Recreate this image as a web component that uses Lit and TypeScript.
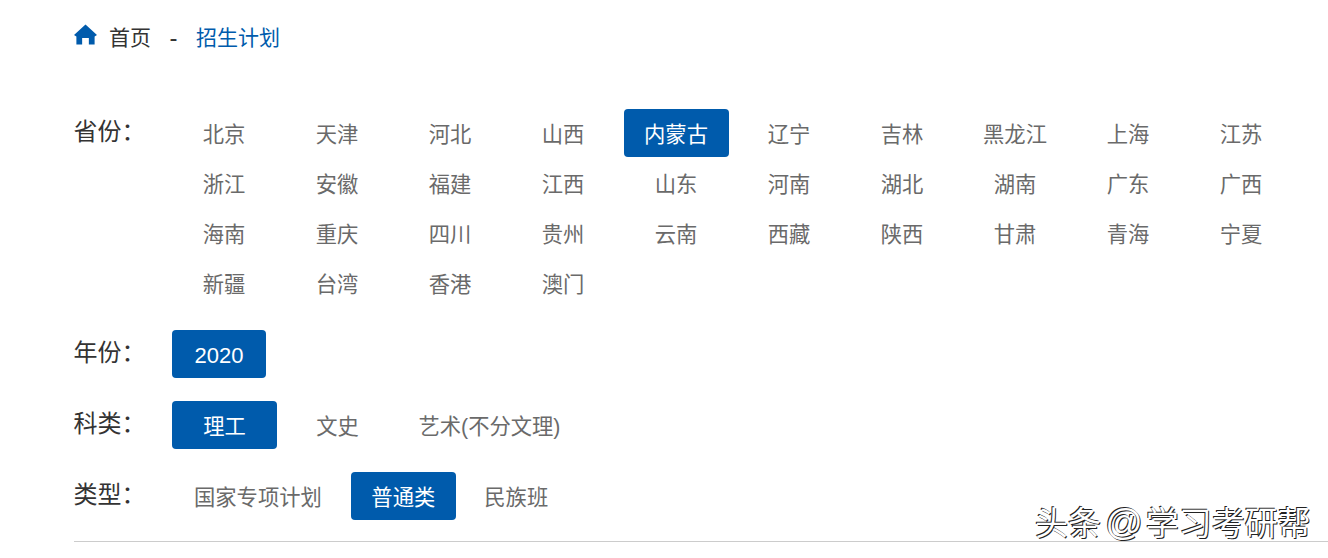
import { LitElement, html, css } from "lit";
import { customElement } from "lit/decorators.js";

const provinces = ["北京","天津","河北","山西","内蒙古","辽宁","吉林","黑龙江","上海","江苏","浙江","安徽","福建","江西","山东","河南","湖北","湖南","广东","广西","海南","重庆","四川","贵州","云南","西藏","陕西","甘肃","青海","宁夏","新疆","台湾","香港","澳门"];

@customElement("app-root")
export class AppRoot extends LitElement {
  static styles = css`
    :host { display: block; position: relative; width: 1328px; height: 558px; overflow: hidden; background: #fff; font-family: "Liberation Sans", "Noto Sans CJK SC", sans-serif; color: #333; }
    .page { display: flex; flex-direction: column; padding: 21px 0 0 74px; }
    .crumb { display: flex; align-items: center; height: 29px; padding-top: 2px; font-size: 21px; line-height: 29px; color: #333; margin-bottom: 57px; }
    .crumb svg { width: 23px; height: 23px; margin-right: 12px; margin-top: -5px; }
    .sep { margin: 0 18.5px; font-size: 24px; line-height: 20px; }
    .now { color: #005bac; }
    .row { display: flex; margin-bottom: 23px; }
    .label { width: 98px; flex: none; font-size: 24px; line-height: 46px; color: #333; margin-left: -0.5px; margin-right: 0.5px; }
    .grid { display: grid; grid-template-columns: repeat(10, 113px); row-gap: 2px; justify-items: center; margin-left: -4.5px; }
    .opts { display: flex; gap: 8px; }
    .opt { box-sizing: border-box; height: 48px; line-height: 52px; padding: 0 20.5px; font-size: 21.3px; color: #6a6a6a; border-radius: 4px; text-align: center; white-space: nowrap; }
    .wide { width: 105px; }
    .num { width: 94px; padding: 0; font-size: 22px; }
    .first { padding: 0 21px 0 22px; }
    .on { background: #005bac; color: #fff; }
    .line { height: 1px; background: #ccc; margin-top: -2px; }
    .mark { position: absolute; left: 1035px; top: 501px; font-size: 33px; word-spacing: -5px; line-height: 44px; color: #fff; white-space: nowrap; text-shadow: -1px -1px 0 #222, 1px 1px 0 #222; }
    .at { font-size: 37px; margin-right: 3px; }
  `;
  render() {
    return html`<div class="page">
      <div class="crumb">
        <svg viewBox="0 0 24 24"><path fill="#005bac" d="M12 0.5 L24 11.5 L21.5 13 L21.5 21.5 L15.5 21.5 L15.5 14.5 L8.5 14.5 L8.5 21.5 L2.5 21.5 L2.5 13 L0 11.5 Z"/></svg>
        <span>首页</span><span class="sep">-</span><span class="now">招生计划</span>
      </div>
      <div class="row"><div class="label">省份：</div>
        <div class="grid">${provinces.map((p) => html`<div class="opt ${p === "内蒙古" ? "wide on" : ""}">${p}</div>`)}</div>
      </div>
      <div class="row"><div class="label">年份：</div><div class="opts"><div class="opt num on">2020</div></div></div>
      <div class="row"><div class="label">科类：</div><div class="opts"><div class="opt wide on">理工</div><div class="opt wide">文史</div><div class="opt">艺术(不分文理)</div></div></div>
      <div class="row"><div class="label">类型：</div><div class="opts"><div class="opt first">国家专项计划</div><div class="opt wide on">普通类</div><div class="opt">民族班</div></div></div>
      <div class="line"></div>
    </div>
    <div class="mark">头条 <span class="at">@</span>学习考研帮</div>`;
  }
}
